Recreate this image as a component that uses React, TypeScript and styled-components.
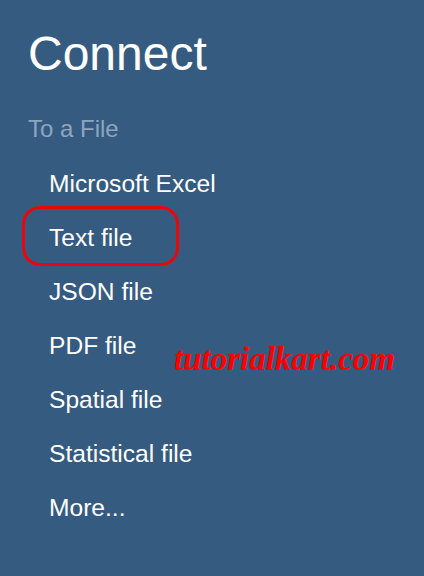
import React from "react";
import styled, { createGlobalStyle, css } from "styled-components";

const GlobalStyle = createGlobalStyle`
  html, body {
    margin: 0;
    padding: 0;
    background: #365b80;
  }
  body {
    font-family: "Liberation Sans", Arial, sans-serif;
  }
`;

const Panel = styled.div`
  position: relative;
  box-sizing: border-box;
  width: 424px;
  min-height: 576px;
  background: #365b80;
  padding: 27px 0 0 28px;
  font-family: "Liberation Sans", Arial, sans-serif;
`;

const Title = styled.h1`
  margin: 0;
  font-size: 48px;
  line-height: 54px;
  font-weight: 400;
  color: #ffffff;
`;

const Section = styled.h2`
  margin: 34px 0 0 0;
  font-size: 24px;
  line-height: 28px;
  font-weight: 400;
  color: #8ea5bf;
`;

const List = styled.ul`
  list-style: none;
  margin: 14px 0 0 0;
  padding: 0 0 0 21px;
`;

const Item = styled.li<{ $highlighted?: boolean }>`
  position: relative;
  font-size: 24.6px;
  line-height: 54px;
  color: #ffffff;
  ${(p) =>
    p.$highlighted &&
    css`
      &::after {
        content: "";
        position: absolute;
        top: -5px;
        left: -27px;
        width: 157px;
        height: 60px;
        box-sizing: border-box;
        border: 3px solid #e8080c;
        border-radius: 18px;
      }
    `}
`;

const Watermark = styled.div`
  position: absolute;
  left: 174px;
  top: 343px;
  font-family: "Liberation Serif", "Times New Roman", serif;
  font-style: italic;
  font-weight: 700;
  font-size: 33px;
  line-height: 33px;
  color: #ff0000;
`;

const items = [
  "Microsoft Excel",
  "Text file",
  "JSON file",
  "PDF file",
  "Spatial file",
  "Statistical file",
  "More...",
];

export default function App() {
  return (
    <>
      <GlobalStyle />
      <Panel>
        <Title>Connect</Title>
        <Section>To a File</Section>
        <List>
          {items.map((label) => (
            <Item key={label} $highlighted={label === "Text file"}>
              {label}
            </Item>
          ))}
        </List>
        <Watermark>tutorialkart.com</Watermark>
      </Panel>
    </>
  );
}
